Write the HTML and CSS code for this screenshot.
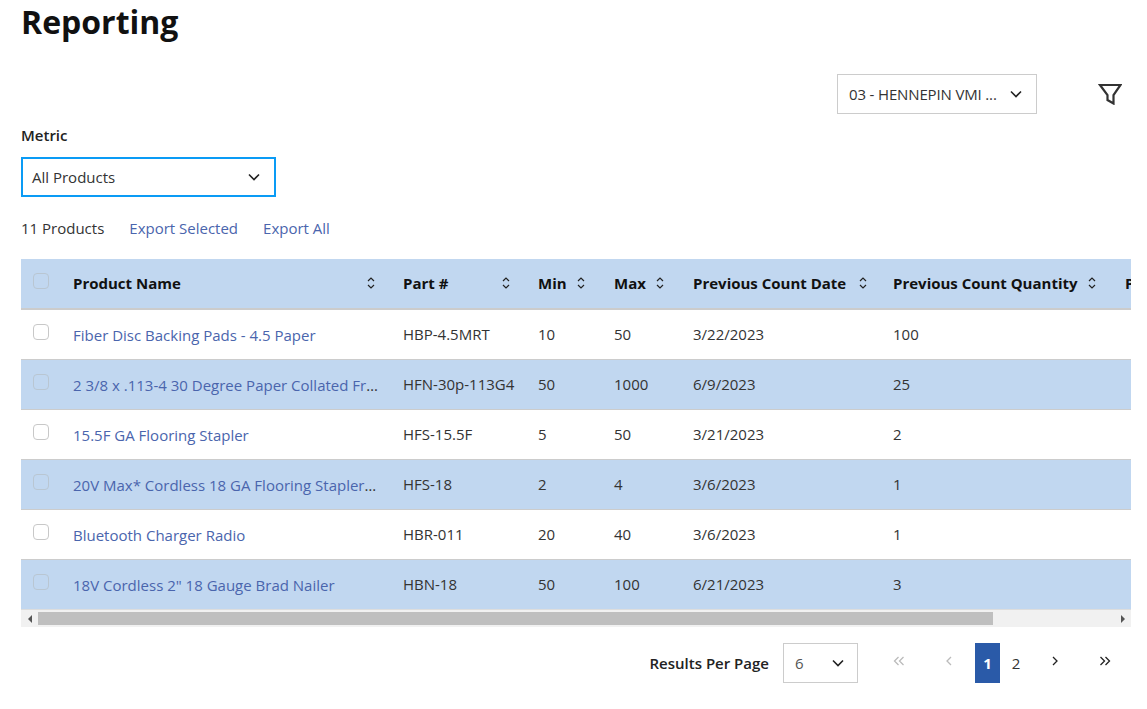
FILE: index.html
```html
<!DOCTYPE html>
<html lang="en">
<head>
<meta charset="utf-8">
<title>Reporting</title>
<link rel="stylesheet" href="styles.css">
</head>
<body>
<main class="page">
  <h1 class="title">Reporting</h1>
  <div class="toolbar">
    <div class="select select-location"><span class="select-text">03 - HENNEPIN VMI ...</span><svg class="chev" viewBox="0 0 12 8"><path d="M1 1.5l5 5 5-5"/></svg></div>
    <svg class="filter" viewBox="0 0 24 22"><path d="M2 2h20.5l-7 10v8.500l-6-3.500v-5z"/></svg>
  </div>
  <label class="metric-label">Metric</label>
  <div class="select select-metric"><span class="select-text">All Products</span><svg class="chev" viewBox="0 0 12 8"><path d="M1 1.5l5 5 5-5"/></svg></div>
  <div class="actions">
    <span class="count">11 Products</span>
    <a class="link">Export Selected</a>
    <a class="link">Export All</a>
  </div>
  <div class="table-wrap">
    <table class="grid">
      <colgroup>
        <col class="c-check"><col class="c-name"><col class="c-part"><col class="c-min"><col class="c-max"><col class="c-date"><col class="c-qty"><col class="c-next">
      </colgroup>
      <thead>
        <tr>
          <th class="cell-check"><span class="check"></span></th>
          <th><div class="th"><span>Product Name</span><svg class="sort" viewBox="0 0 10 14"><path d="M2 5l3-3 3 3M2 9l3 3 3-3"/></svg></div></th>
          <th><div class="th"><span>Part #</span><svg class="sort" viewBox="0 0 10 14"><path d="M2 5l3-3 3 3M2 9l3 3 3-3"/></svg></div></th>
          <th><div class="th th-tight"><span>Min</span><svg class="sort" viewBox="0 0 10 14"><path d="M2 5l3-3 3 3M2 9l3 3 3-3"/></svg></div></th>
          <th><div class="th th-tight"><span>Max</span><svg class="sort" viewBox="0 0 10 14"><path d="M2 5l3-3 3 3M2 9l3 3 3-3"/></svg></div></th>
          <th class="th-date"><div class="th"><span>Previous Count Date</span><svg class="sort" viewBox="0 0 10 14"><path d="M2 5l3-3 3 3M2 9l3 3 3-3"/></svg></div></th>
          <th><div class="th th-tight"><span>Previous Count Quantity</span><svg class="sort" viewBox="0 0 10 14"><path d="M2 5l3-3 3 3M2 9l3 3 3-3"/></svg></div></th>
          <th><div class="th"><span>Price</span></div></th>
        </tr>
      </thead>
      <tbody>
        <tr><td class="cell-check"><span class="check"></span></td><td class="cell-name"><a class="link name">Fiber Disc Backing Pads - 4.5 Paper</a></td><td class="cell-part">HBP-4.5MRT</td><td>10</td><td>50</td><td>3/22/2023</td><td>100</td><td></td></tr>
        <tr><td class="cell-check"><span class="check"></span></td><td class="cell-name"><a class="link name">2 3/8 x .113-4 30 Degree Paper Collated Framing Nails</a></td><td class="cell-part">HFN-30p-113G4</td><td>50</td><td>1000</td><td>6/9/2023</td><td>25</td><td></td></tr>
        <tr><td class="cell-check"><span class="check"></span></td><td class="cell-name"><a class="link name">15.5F GA Flooring Stapler</a></td><td class="cell-part">HFS-15.5F</td><td>5</td><td>50</td><td>3/21/2023</td><td>2</td><td></td></tr>
        <tr><td class="cell-check"><span class="check"></span></td><td class="cell-name"><a class="link name">20V Max* Cordless 18 GA Flooring Stapler Kit</a></td><td class="cell-part">HFS-18</td><td>2</td><td>4</td><td>3/6/2023</td><td>1</td><td></td></tr>
        <tr><td class="cell-check"><span class="check"></span></td><td class="cell-name"><a class="link name">Bluetooth Charger Radio</a></td><td class="cell-part">HBR-011</td><td>20</td><td>40</td><td>3/6/2023</td><td>1</td><td></td></tr>
        <tr><td class="cell-check"><span class="check"></span></td><td class="cell-name"><a class="link name">18V Cordless 2" 18 Gauge Brad Nailer</a></td><td class="cell-part">HBN-18</td><td>50</td><td>100</td><td>6/21/2023</td><td>3</td><td></td></tr>
      </tbody>
    </table>
  </div>
  <div class="scrollbar">
    <span class="arrow arrow-left"></span>
    <span class="thumb"></span>
    <span class="track"></span>
    <span class="arrow arrow-right"></span>
  </div>
  <div class="pager">
    <span class="per-page">Results Per Page</span>
    <div class="select select-size"><span class="select-text">6</span><svg class="chev" viewBox="0 0 12 8"><path d="M1 1.5l5 5 5-5"/></svg></div>
    <nav class="pages">
      <span class="pg pg-wide muted"><svg class="pg-icon" viewBox="0 0 12 10"><path d="M5.5 1l-4 4 4 4M10.5 1l-4 4 4 4"/></svg></span>
      <span class="pg pg-wide muted"><svg class="pg-icon" viewBox="0 0 12 10"><path d="M8 1L4 5l4 4"/></svg></span>
      <span class="pg current">1</span>
      <span class="pg">2</span>
      <span class="pg pg-next"><svg class="pg-icon" viewBox="0 0 12 10"><path d="M4 1l4 4-4 4"/></svg></span>
      <span class="pg pg-last"><svg class="pg-icon" viewBox="0 0 12 10"><path d="M1.5 1l4 4-4 4M6.500 1l4 4-4 4"/></svg></span>
    </nav>
  </div>
</main>
</body>
</html>
```

FILE: styles.css
```css
* { box-sizing: border-box; }
html, body { margin: 0; padding: 0; background: #fff; }
body { font-family: "Open Sans", "Liberation Sans", sans-serif; font-size: 15px; color: #333; overflow: hidden; height: 709px; }
.page { padding: 0 16px 0 21px; }
.title { margin: 0; font-size: 32px; line-height: 44px; font-weight: 700; color: #111; }
.toolbar { display: flex; align-items: center; margin-top: 30px; height: 40px; justify-content: flex-end; padding-right: 9px; }
.select { display: flex; align-items: center; justify-content: space-between; height: 40px; border: 1px solid #ccc; background: #fff; color: #333; font-size: 15px; }
.select-text { white-space: nowrap; }
.select-location { width: 200px; padding: 0 14px 0 11px; margin-right: 61px; letter-spacing: -0.15px; }
.chev { width: 12px; height: 8px; fill: none; stroke: #222; stroke-width: 1.6; }
.filter { width: 24px; height: 22px; fill: none; stroke: #333; stroke-width: 2.2; }
.metric-label { display: block; margin-top: 10px; font-size: 15px; line-height: 22px; font-weight: 600; color: #222; }
.select-metric { margin-top: 11px; width: 255px; border: 2px solid #0a9bf5; padding: 0 14px 0 9px; }
.actions { display: flex; align-items: center; margin-top: 19px; height: 24px; font-size: 15px; }
.count { margin-right: 25px; }
.link { color: #4a65ad; text-decoration: none; }
.actions .link { margin-right: 25px; }
.table-wrap { margin-top: 19px; overflow: hidden; }
.grid { border-collapse: separate; border-spacing: 0; table-layout: fixed; width: 1300px; font-size: 15px; }
.c-check { width: 40px; }
.c-name { width: 330px; }
.c-part { width: 135px; }
.c-min { width: 76px; }
.c-max { width: 79px; }
.c-date { width: 200px; }
.c-qty { width: 232px; }
.c-next { width: 208px; }
th { height: 51px; padding: 0 12px 2px; background: #c1d7f0; border-bottom: 2px solid #ccc; text-align: left; font-size: 15px; font-weight: 700; color: #111; }
th.th-date { padding-right: 10px; }
td { height: 50px; padding: 0 12px 2px; border-bottom: 1px solid #ccc; white-space: nowrap; overflow: hidden; text-overflow: ellipsis; }
td.cell-name { padding-bottom: 0; }
td.cell-part { padding-right: 4px; }
tbody tr:nth-child(even) td { background: #c1d7f0; }
tbody tr:last-child td { border-bottom: 1px solid #ddd; }
.th { display: flex; align-items: center; justify-content: space-between; white-space: nowrap; }
.sort { width: 10px; height: 14px; margin-right: 3px; fill: none; stroke: #222; stroke-width: 1.2; flex: none; }
.th-tight .sort { margin-right: 4px; }
th.cell-check, td.cell-check { padding: 0 0 6px 12px; }
.check { display: block; width: 16px; height: 16px; border: 1px solid #c8c8c8; border-radius: 4px; background: #fff; }
th .check, tr:nth-child(even) .check { background: transparent; border-color: #b9c6d2; }
.scrollbar { display: flex; align-items: center; height: 17px; background: #f1f1f1; }
.arrow { width: 17px; height: 16px; flex: none; display: flex; align-items: center; justify-content: center; }
.arrow-left::before { content: ""; border: 4px solid transparent; border-left-width: 0; border-right: 4px solid #555; }
.arrow-right::before { content: ""; border: 4px solid transparent; border-right-width: 0; border-left: 4px solid #555; }
.thumb { width: 955px; height: 13px; background: #bfbfbf; flex: none; }
.track { flex: 1; }
.pager { display: flex; align-items: center; justify-content: flex-end; margin-top: 16px; height: 40px; }
.per-page { font-size: 15px; font-weight: 600; color: #222; margin-right: 14px; }
.select-size { width: 75px; padding: 0 13px 0 11px; font-size: 15px; color: #555; margin-right: 17px; }
.pages { display: flex; align-items: center; }
.pg { display: flex; align-items: center; justify-content: center; width: 32px; height: 40px; color: #333; font-size: 15px; }
.pg-wide { width: 50px; }
.muted { padding-right: 2px; }
.pg-next { width: 46px; }
.pg-last { width: 53px; }
.pg-icon { width: 12px; height: 10px; fill: none; stroke: #222; stroke-width: 1.3; margin-bottom: 4px; }
.muted .pg-icon { stroke: #bbb; }
.current { width: 25px; background: #2a5aa8; color: #fff; font-weight: 700; }
```
